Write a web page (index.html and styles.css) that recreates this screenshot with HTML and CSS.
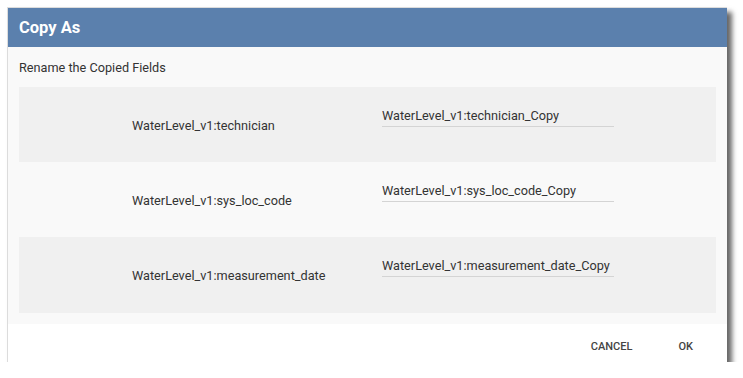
FILE: index.html
```html
<!DOCTYPE html>
<html>

<head>
    <meta charset='UTF-8'>
    <title>Copy As</title>
    <link rel="stylesheet" href="styles.css">
</head>

<body>
    <div class='dialog'>
        <div class='dialog-header'>
            <h1 class='dialog-title'>Copy As</h1>
        </div>

        <div class='dialog-body'>
            <div class='subtitle'>Rename the Copied Fields</div>

            <div class='field-list'>
                <!-- technician -->
                <div class='field-row'>
                    <div class='field-label'>WaterLevel_v1:technician</div>
                    <input type='text' class='field-input' value='WaterLevel_v1:technician_Copy'>
                </div>

                <!-- sys_loc_code -->
                <div class='field-row'>
                    <div class='field-label'>WaterLevel_v1:sys_loc_code</div>
                    <input type='text' class='field-input' value='WaterLevel_v1:sys_loc_code_Copy'>
                </div>

                <!-- measurement_date -->
                <div class='field-row'>
                    <div class='field-label'>WaterLevel_v1:measurement_date</div>
                    <input type='text' class='field-input' value='WaterLevel_v1:measurement_date_Copy'>
                </div>
            </div>
        </div>

        <div class='dialog-footer'>
            <button class='btn'>Cancel</button>
            <button class='btn'>OK</button>
        </div>
    </div>
</body>

</html>
```

FILE: styles.css
```css
:root {
    --header-bg: #5b80ad;
    --body-bg: #f9f9f9;
    --row-bg: #f0f0f0;
    --text-primary: #333333;
}

body {
    font-family: Roboto, "Liberation Sans", Arial, sans-serif;
    margin: 0;
    padding: 7px 0 0 7px;
    background-color: #ffffff;
}

.dialog {
    width: 719px;
    background: #ffffff;
    border: 1px solid #dcdcdc;
    border-right: none;
    border-bottom: none;
    box-shadow: 5px 5px 5px rgba(0, 0, 0, 0.6);
}

.dialog-header {
    background-color: var(--header-bg);
    height: 39px;
    display: flex;
    align-items: center;
    padding: 0 11px;
}

.dialog-title {
    margin: 0;
    color: #ffffff;
    font-size: 16.5px;
    font-weight: bold;
}

.dialog-body {
    background-color: var(--body-bg);
    padding: 0 11px 11px;
}

.subtitle {
    height: 40px;
    display: flex;
    align-items: center;
    font-size: 12.7px;
    color: var(--text-primary);
}

.field-row {
    height: 75px;
    display: grid;
    grid-template-columns: 250px 232px;
    align-items: center;
    padding-left: 113px;
}

.field-row:nth-child(odd) {
    background-color: var(--row-bg);
}

.field-row:last-child {
    height: 76px;
}

.field-label {
    font-size: 12.7px;
    color: var(--text-primary);
    padding-top: 1px;
}

.field-input {
    font-family: inherit;
    font-size: 12.7px;
    color: var(--text-primary);
    background: transparent;
    border: none;
    border-bottom: 1px solid #d4d4d4;
    padding: 0 0 3px;
    margin-bottom: 15px;
    width: 232px;
    outline: none;
}

.dialog-footer {
    height: 38px;
    display: flex;
    align-items: center;
    justify-content: flex-end;
    padding: 6px 18px 0 0;
    box-sizing: border-box;
    gap: 2px;
}

.btn {
    font-family: inherit;
    background: none;
    border: none;
    text-transform: uppercase;
    font-size: 11px;
    font-weight: 500;
    color: #444444;
    padding: 8px 16px;
    cursor: pointer;
}

.btn:last-child {
    padding: 8px 16px 8px 28px;
}
```
